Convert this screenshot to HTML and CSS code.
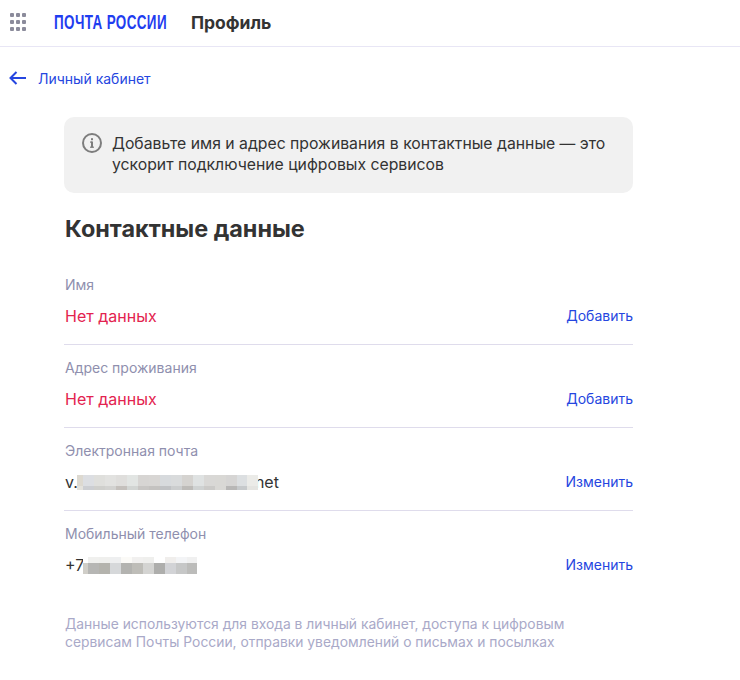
FILE: index.html
```html
<!DOCTYPE html>
<html lang="ru">

<head>
    <meta charset="UTF-8">
    <meta name="viewport" content="width=device-width, initial-scale=1.0">
    <title>Профиль</title>

    <link rel="stylesheet" href="styles.css">
</head>

<body>
    <header class="topbar">
        <svg class="apps" width="16" height="18" viewBox="0 0 16 18">
            <g fill="#8b8b9b">
                <rect x="0" y="0" width="4" height="4" rx="1"/><rect x="6" y="0" width="4" height="4" rx="1"/><rect x="12" y="0" width="4" height="4" rx="1"/>
                <rect x="0" y="7" width="4" height="4" rx="1"/><rect x="6" y="7" width="4" height="4" rx="1"/><rect x="12" y="7" width="4" height="4" rx="1"/>
                <rect x="0" y="14" width="4" height="4" rx="1"/><rect x="6" y="14" width="4" height="4" rx="1"/><rect x="12" y="14" width="4" height="4" rx="1"/>
            </g>
        </svg>
        <span class="logo"><span class="logo-text">ПОЧТА РОССИИ</span></span>
        <span class="page-title">Профиль</span>
    </header>

    <a class="back" href="#">
        <svg width="17" height="14" viewBox="0 0 17 14" fill="none" stroke="#2546e0" stroke-width="2">
            <path d="M17 7H1.5M7.5 1 1.5 7l6 6"/>
        </svg>
        <span>Личный кабинет</span>
    </a>

    <main class="content">
        <div class="notice">
            <svg class="notice-icon" width="20" height="20" viewBox="0 0 20 20" fill="none">
                <circle cx="10" cy="10" r="9" stroke="#7d7d7d" stroke-width="2"/>
                <rect x="9" y="8.5" width="2" height="6" fill="#7d7d7d"/>
                <rect x="8" y="8.5" width="2" height="1.2" fill="#7d7d7d"/>
                <rect x="8" y="13.6" width="4" height="1.2" fill="#7d7d7d"/>
                <rect x="9" y="5.2" width="2" height="2" fill="#7d7d7d"/>
            </svg>
            <p>Добавьте имя и адрес проживания в контактные данные — это ускорит подключение цифровых сервисов</p>
        </div>

        <h1>Контактные данные</h1>

        <section class="field">
            <div class="field-label">Имя</div>
            <div class="field-row">
                <span class="empty">Нет данных</span>
                <a href="#">Добавить</a>
            </div>
        </section>
        <section class="field">
            <div class="field-label">Адрес проживания</div>
            <div class="field-row">
                <span class="empty">Нет данных</span>
                <a href="#">Добавить</a>
            </div>
        </section>
        <section class="field">
            <div class="field-label">Электронная почта</div>
            <div class="field-row">
                <span class="value">v.<span class="mask mask-email"></span>net</span>
                <a href="#">Изменить</a>
            </div>
        </section>
        <section class="field field-last">
            <div class="field-label">Мобильный телефон</div>
            <div class="field-row">
                <span class="value">+7<span class="mask mask-phone"></span></span>
                <a href="#">Изменить</a>
            </div>
        </section>

        <p class="note">Данные используются для входа в личный кабинет, доступа к цифровым сервисам Почты России, отправки уведомлений о письмах и посылках</p>
    </main>
</body>

</html>
```
FILE: styles.css
```css
* {
    box-sizing: border-box;
}

body {
    margin: 0;
    font-family: "Inter", "Noto Sans", sans-serif;
    color: #333;
    background-color: #fff;
}

a {
    color: #2546e0;
    text-decoration: none;
}

.topbar {
    display: flex;
    align-items: center;
    height: 47px;
    padding-left: 10px;
    border-bottom: 1px solid #e8e6f5;
}

.apps {
    margin-bottom: 2px;
}

.logo {
    display: block;
    width: 114px;
    margin: 0 0 2px 28px;
}

.logo-text {
    display: inline-block;
    font-family: "Liberation Sans", sans-serif;
    font-size: 21px;
    font-weight: 700;
    letter-spacing: 0.6px;
    line-height: 24px;
    color: #1f3df0;
    white-space: nowrap;
    transform: scaleX(0.64);
    transform-origin: left center;
}

.page-title {
    margin: 0 0 2px 23px;
    font-size: 17.5px;
    font-weight: 700;
}

.back {
    display: flex;
    align-items: center;
    gap: 12px;
    height: 20px;
    margin: 21px 0 0 9px;
    font-size: 14px;
}

.content {
    width: 569px;
    margin: 29px 0 0 64px;
}

.notice {
    display: flex;
    gap: 10px;
    height: 76px;
    padding: 16px 18px;
    background-color: #f1f1f1;
    border-radius: 10px;
}

.notice-icon {
    flex: none;
}

.notice p {
    margin: 0;
    font-size: 15.77px;
    line-height: 21px;
}

h1 {
    margin: 22px 0 0;
    padding-left: 1px;
    font-size: 23.4px;
    line-height: 28px;
    font-weight: 700;
}

.field {
    height: 83px;
    padding-top: 14px;
    border-bottom: 1px solid #dfdcec;
}

.field:first-of-type {
    margin-top: 19px;
}

.field-last {
    border-bottom: none;
}

.field-label {
    padding-left: 1px;
    font-size: 14px;
    line-height: 18px;
    color: #8f8fae;
}

.field-row {
    display: flex;
    justify-content: space-between;
    align-items: center;
    margin-top: 10px;
    padding-left: 1px;
    font-size: 14px;
    line-height: 24px;
}

.empty {
    font-size: 16px;
    color: #e3234f;
}

.value {
    display: flex;
    align-items: center;
    font-size: 16px;
}

.mask {
    display: block;
    position: relative;
    background-repeat: no-repeat;
}

.mask-email {
    width: 181px;
    height: 15px;
    margin: 0 -3px 0 -1px;
    background-size: 100% 11px, 100% 4px;
    background-position: 0 0, 0 11px;
    background-image:
        linear-gradient(90deg, #ddd9d0 6px, #dcdee2 6px 17px, #dfdfdc 17px 28px, #e2e2e0 28px 39px, #dfdedc 39px 50px, #e2e5e3 50px 61px, #d7d5d3 61px 72px, #d8d6d4 72px 83px, #d7dadd 83px 94px, #d9dbdc 94px 105px, #d5d3d0 105px 116px, #dfe2e2 116px 127px, #d9d8d6 127px 138px, #d9d8d5 138px 149px, #d6d5d4 149px 160px, #dcdfe1 160px 170px, #ebebe8 170px),
        linear-gradient(90deg, #e4e2dc 6px, #ccced2 6px 17px, #cfcfcc 17px 28px, #d2d2d0 28px 39px, #c4c0bc 39px 50px, #d2d5d3 50px 61px, #c8c6c4 61px 72px, #c4c2c0 72px 83px, #c0c2c5 83px 94px, #cbcdce 94px 105px, #bdbbb8 105px 116px, #cfd2d2 116px 127px, #cbcac8 127px 138px, #d9d8d5 138px 149px, #b8b7b6 149px 160px, #c6c9cb 160px 170px, #e4e4e1 170px);
}

.mask-phone {
    width: 114px;
    height: 17px;
    margin-left: -1px;
    background-size: 100% 6px, 100% 11px;
    background-position: 0 0, 0 6px;
    background-image:
        linear-gradient(90deg, #fff 5px, #f0f0ee 5px 16px, #efefed 16px 27px, #eeeff0 27px 38px, #fbfaf7 38px 49px, #f1f0ef 49px 60px, #efefed 60px 71px, #fff 71px 82px, #f0eeec 82px 93px, #f3f4f6 93px 104px, #f0f0f0 104px),
        linear-gradient(90deg, #d0cec8 5px, #b6b6b4 5px 16px, #b4b3ad 16px 27px, #d6d8da 27px 38px, #b3b3b0 38px 49px, #bebdb8 49px 60px, #d4d4d2 60px 71px, #aeaeac 71px 82px, #d2d3d6 82px 93px, #c6c7c7 93px 104px, #bcbcba 104px);
}

.note {
    margin: 21px 0 0;
    padding-left: 1px;
    font-size: 13.85px;
    line-height: 18px;
    color: #a9a9c8;
}
```
